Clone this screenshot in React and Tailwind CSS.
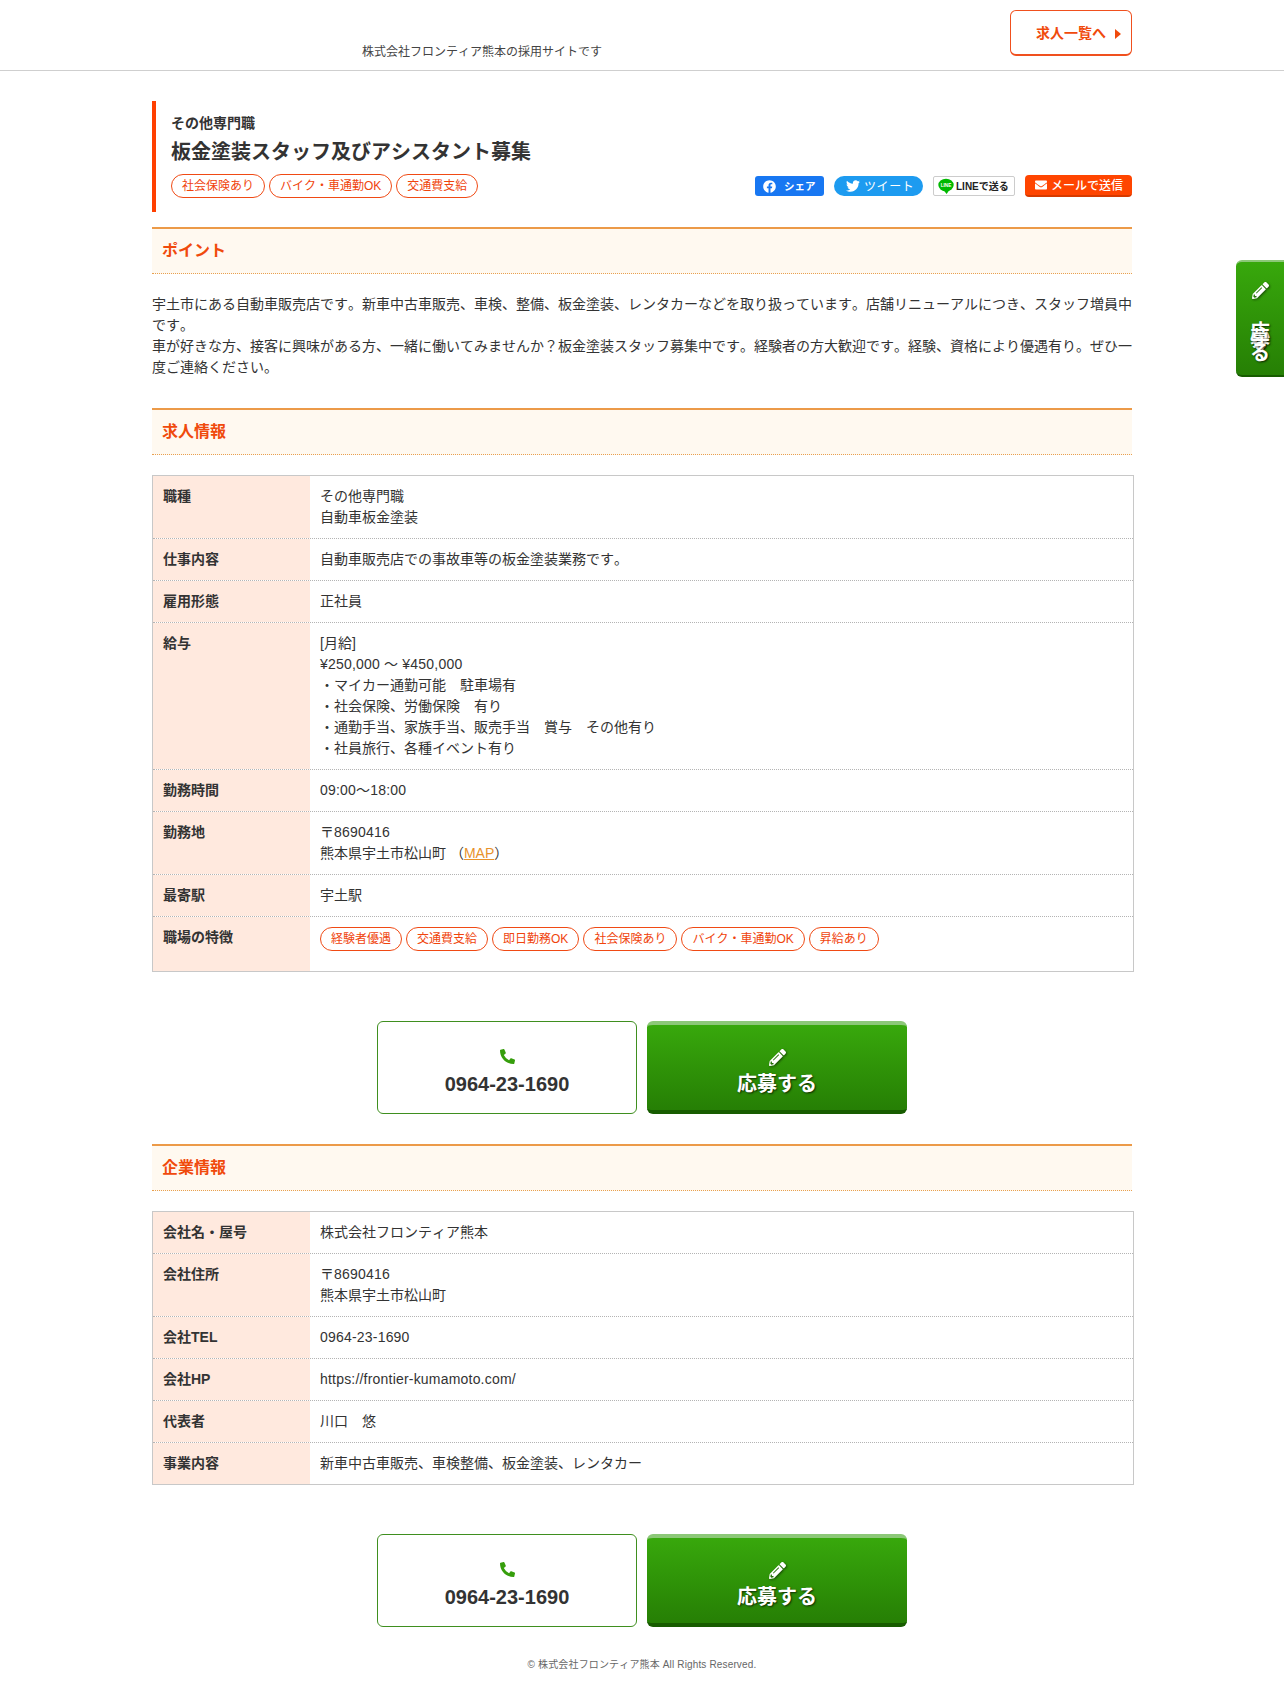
import { FaFacebook, FaTwitter, FaEnvelope, FaPencilAlt, FaPhoneAlt } from 'react-icons/fa';

const Tag = ({ children }) => (
  <span className="inline-block h-6 rounded-full border border-[#f04a14] bg-white px-2.5 text-xs leading-[22px] text-[#f0440c]">
    {children}
  </span>
);

const SectionTitle = ({ children }) => (
  <h2 className="h-[47px] border-t-2 border-b border-t-[#ec9a48] border-b-[#e8a050] [border-bottom-style:dotted] bg-[#fff9f0] pl-2.5 text-base leading-[44px] font-bold text-[#f04a0c]">
    {children}
  </h2>
);

const Row = ({ label, last, children }) => (
  <div className={`flex ${last ? '' : 'border-b border-dotted border-[#b4b4b4]'}`}>
    <div className="w-[157px] shrink-0 bg-[#ffe9de] px-2.5 py-2.5 font-bold">{label}</div>
    <div className="flex-1 px-2.5 py-2.5">{children}</div>
  </div>
);

const Latin = ({ children }) => <span className="tracking-[0.2px]">{children}</span>;

const Actions = () => (
  <div className="flex justify-center gap-2.5">
    <div className="flex h-[93px] w-[260px] flex-col items-center justify-center rounded-md border border-[#3f8f1f] bg-white">
      <FaPhoneAlt className="mt-3 text-[15px] text-[#369e0c]" />
      <div className="mt-1.5 text-xl leading-7 font-bold text-[#333]">0964-23-1690</div>
    </div>
    <div className="flex h-[93px] w-[260px] flex-col items-center justify-center rounded-md border-t-4 border-b-4 border-t-[#8cc878] border-b-[#175c00] bg-gradient-to-b from-[#38a80c] to-[#267f05] text-white">
      <FaPencilAlt className="mt-3 text-[17px] [filter:drop-shadow(1px_1px_1px_rgba(0,0,0,.5))]" />
      <div className="mt-1 text-xl leading-7 font-bold [text-shadow:1px_1px_2px_rgba(0,0,0,.7)]">応募する</div>
    </div>
  </div>
);

const jobTags = ['経験者優遇', '交通費支給', '即日勤務OK', '社会保険あり', 'バイク・車通勤OK', '昇給あり'];

export default function App() {
  return (
    <div className="relative min-h-[1682px] bg-white text-sm leading-[21px] text-[#333] [font-kerning:none] [font-family:'Liberation_Sans','Noto_Sans_CJK_JP',sans-serif]">
      {/* Header */}
      <header className="h-[71px] border-b border-[#cfcfcf]">
        <div className="mx-auto flex w-[980px] justify-between pt-2.5">
          <p className="mt-[34px] ml-[210px] text-xs leading-4 text-[#444]">株式会社フロンティア熊本の採用サイトです</p>
          <a className="flex h-[46px] w-[122px] items-center rounded-md border border-b-2 border-[#f0501e] pt-0.5 pl-[25px] font-bold text-[#f04a0c]">
            求人一覧へ
            <span className="ml-[9px] h-0 w-0 border-y-[5px] border-l-[6px] border-y-transparent border-l-[#f04a0c]" />
          </a>
        </div>
      </header>

      <main className="mx-auto mt-[30px] w-[980px]">
        {/* Title */}
        <div className="h-[111px] border-l-4 border-[#ff3f00] pt-3 pl-[15px]">
          <p className="font-bold">その他専門職</p>
          <h1 className="mt-1 text-xl leading-7 font-bold">板金塗装スタッフ及びアシスタント募集</h1>
          <div className="mt-2 flex items-center justify-between">
            <div className="flex gap-1">
              <Tag>社会保険あり</Tag>
              <Tag>バイク・車通勤OK</Tag>
              <Tag>交通費支給</Tag>
            </div>
            <div className="flex items-center gap-2.5">
              <span className="flex h-5 w-[69px] items-center rounded-[3px] bg-[#1877f2] pl-2 text-[10.5px] font-bold text-white">
                <FaFacebook className="mr-2 text-[13px]" />シェア
              </span>
              <span className="flex h-5 w-[89px] items-center rounded-full bg-[#1d9bf0] pl-3 text-xs tracking-[0.6px] text-white">
                <FaTwitter className="mr-1 text-sm" /><span className="mt-px">ツイート</span>
              </span>
              <span className="flex h-5 w-[82px] items-center rounded-[2px] border border-[#ccc] bg-white pl-1 text-[10px] font-bold text-[#222]">
                <svg viewBox="0 0 24 24" className="mr-0.5 h-4 w-4 shrink-0">
                  <ellipse cx="12" cy="10.5" rx="11.5" ry="9.5" fill="#00b900" />
                  <path d="M9 19 L13 24 L17 18 Z" fill="#00b900" />
                  <text x="12" y="13" textAnchor="middle" fontSize="7" fontWeight="700" fill="#fff">LINE</text>
                </svg>
                LINEで送る
              </span>
              <span className="flex h-[22px] w-[107px] items-center rounded-[4px] border-b-2 border-[#d63a00] bg-[#ff4500] pl-2.5 text-xs font-medium text-white">
                <FaEnvelope className="mr-1 text-xs" /><span className="mt-px">メールで送信</span>
              </span>
            </div>
          </div>
        </div>

        <div className="mt-[15px]"><SectionTitle>ポイント</SectionTitle></div>
        <p className="mt-5">
          宇土市にある自動車販売店です。新車中古車販売、車検、整備、板金塗装、レンタカーなどを取り扱っています。店舗リニューアルにつき、スタッフ増員中です。
          <br />
          車が好きな方、接客に興味がある方、一緒に働いてみませんか？板金塗装スタッフ募集中です。経験者の方大歓迎です。経験、資格により優遇有り。ぜひ一度ご連絡ください。
        </p>

        <div className="mt-[30px]"><SectionTitle>求人情報</SectionTitle></div>
        <div className="mt-5 w-[982px] border border-[#c8c8c8]">
          <Row label="職種">その他専門職<br />自動車板金塗装</Row>
          <Row label="仕事内容">自動車販売店での事故車等の板金塗装業務です。</Row>
          <Row label="雇用形態">正社員</Row>
          <Row label="給与">
            [月給]<br /><Latin>¥250,000 ～ ¥450,000</Latin><br />・マイカー通勤可能　駐車場有<br />・社会保険、労働保険　有り<br />・通勤手当、家族手当、販売手当　賞与　その他有り<br />・社員旅行、各種イベント有り
          </Row>
          <Row label="勤務時間"><Latin>09:00～18:00</Latin></Row>
          <Row label="勤務地">〒<Latin>8690416</Latin><br />熊本県宇土市松山町 （<a className="text-[#e8922c] underline">MAP</a>）</Row>
          <Row label="最寄駅">宇土駅</Row>
          <Row label="職場の特徴" last>
            <div className="mb-[10px] flex gap-1">
              {jobTags.map((tag) => <Tag key={tag}>{tag}</Tag>)}
            </div>
          </Row>
        </div>

        <div className="mt-[49px]"><Actions /></div>

        <div className="mt-[30px]"><SectionTitle>企業情報</SectionTitle></div>
        <div className="mt-5 w-[982px] border border-[#c8c8c8]">
          <Row label="会社名・屋号">株式会社フロンティア熊本</Row>
          <Row label="会社住所">〒<Latin>8690416</Latin><br />熊本県宇土市松山町</Row>
          <Row label="会社TEL"><Latin>0964-23-1690</Latin></Row>
          <Row label="会社HP"><Latin>https://frontier-kumamoto.com/</Latin></Row>
          <Row label="代表者">川口　悠</Row>
          <Row label="事業内容" last>新車中古車販売、車検整備、板金塗装、レンタカー</Row>
        </div>

        <div className="mt-[49px]"><Actions /></div>
      </main>

      <footer className="mt-[30px] text-center text-[10px] leading-4 tracking-[0.15px] text-[#666]">
        © 株式会社フロンティア熊本 All Rights Reserved.
      </footer>

      {/* Side apply tab */}
      <a className="absolute top-[260px] right-0 flex h-[117px] w-12 flex-col items-center rounded-l-md border-t-2 border-b-2 border-t-[#8cc878] border-b-[#175c00] bg-gradient-to-b from-[#38a80c] to-[#267f05] pt-5 text-white">
        <FaPencilAlt className="text-[17px] [filter:drop-shadow(1px_1px_1px_rgba(0,0,0,.5))]" />
        <span className="mt-[30px] w-5 text-center text-xl leading-[7px] font-bold [text-shadow:1px_1px_2px_rgba(0,0,0,.7)]">応募する</span>
      </a>
    </div>
  );
}
